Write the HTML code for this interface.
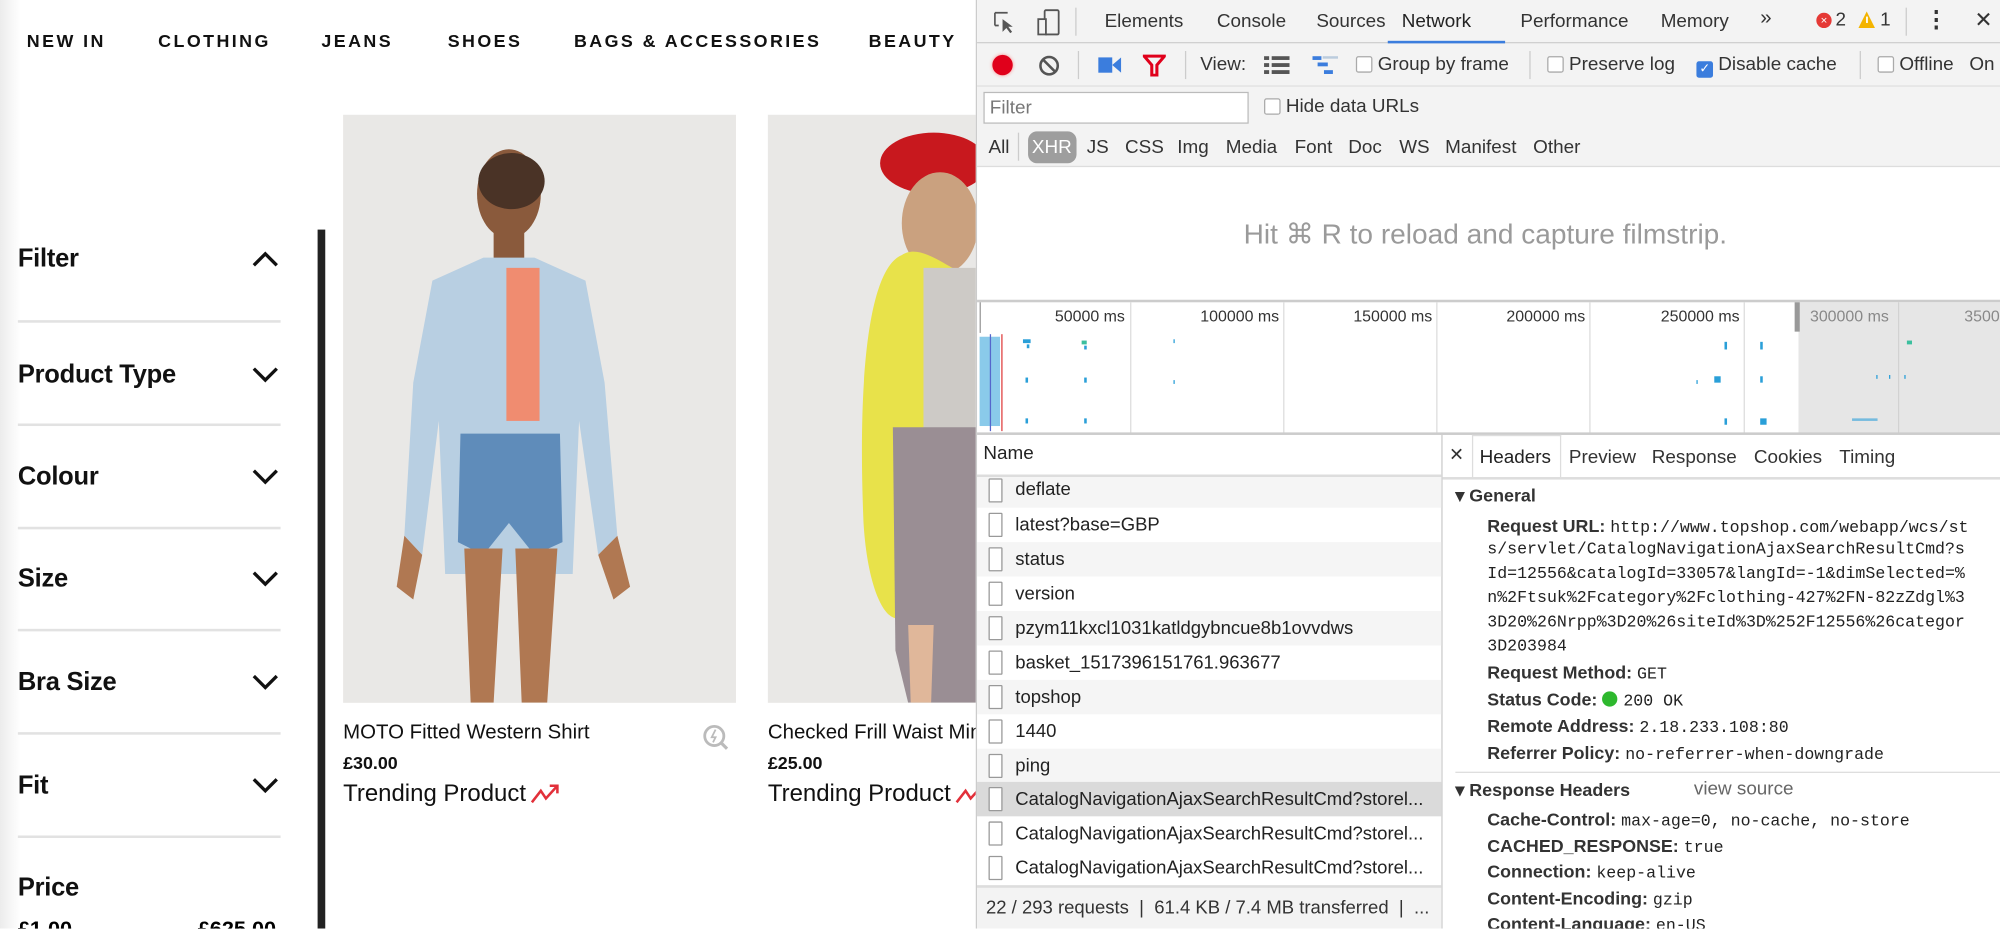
<!DOCTYPE html>
<html><head><meta charset="utf-8">
<style>
*{box-sizing:border-box;margin:0;padding:0}
html,body{width:2000px;height:928px;overflow:hidden;background:#fff}
#w{position:absolute;left:0;top:0;width:1568px;height:728px;transform:scale(1.27551);transform-origin:0 0;font-family:"Liberation Sans",sans-serif;overflow:hidden}
.a{position:absolute;white-space:nowrap}
.nav{top:24px;font-size:14px;letter-spacing:1.9px;color:#111;font-weight:bold}
.fl{left:14px;font-size:20px;font-weight:bold;color:#111;letter-spacing:-0.2px}
.hr{position:absolute;left:14px;width:206px;height:2px;background:#e2e2e2}
.chev{position:absolute;left:197px;width:22px;height:14px}
.dt{font-size:14.8px;color:#333}
.row{position:absolute;left:766px;width:364px;height:27px;font-size:14.5px;color:#222}
.row i{position:absolute;left:9px;top:4px;width:11px;height:19px;border:1px solid #999;border-radius:1px;background:#fff}
.row span{position:absolute;left:30px;top:6px;line-height:16px}
.mono{font-family:"Liberation Mono",monospace;font-size:13px;color:#222}
.k{font-weight:bold;color:#333;font-size:14px}
.ln{position:absolute;left:1166px;white-space:nowrap;line-height:16px}
.cb{display:inline-block;width:13px;height:13px;border:1px solid #aaa;border-radius:2px;background:#fff;vertical-align:-2px}
</style></head><body><div id="w">
<div class="a" style="left:0;top:0;width:16px;height:728px;background:linear-gradient(90deg,#ececec,#fff)"></div>
<div class="a nav" style="left:21px">NEW IN</div>
<div class="a nav" style="left:124px">CLOTHING</div>
<div class="a nav" style="left:252px">JEANS</div>
<div class="a nav" style="left:351px">SHOES</div>
<div class="a nav" style="left:450px">BAGS &amp; ACCESSORIES</div>
<div class="a nav" style="left:681px">BEAUTY</div>

<div class="a fl" style="top:192px">Filter</div>
<svg class="chev" style="top:196px" viewBox="0 0 22 14"><path d="M2 12 L11 3 L20 12" fill="none" stroke="#111" stroke-width="2.6"/></svg>
<div class="hr" style="top:251px"></div>
<div class="a fl" style="top:283px">Product Type</div>
<svg class="chev" style="top:287px" viewBox="0 0 22 14"><path d="M2 2 L11 11 L20 2" fill="none" stroke="#111" stroke-width="2.6"/></svg>
<div class="hr" style="top:332px"></div>
<div class="a fl" style="top:363px">Colour</div>
<svg class="chev" style="top:367px" viewBox="0 0 22 14"><path d="M2 2 L11 11 L20 2" fill="none" stroke="#111" stroke-width="2.6"/></svg>
<div class="hr" style="top:413px"></div>
<div class="a fl" style="top:443px">Size</div>
<svg class="chev" style="top:447px" viewBox="0 0 22 14"><path d="M2 2 L11 11 L20 2" fill="none" stroke="#111" stroke-width="2.6"/></svg>
<div class="hr" style="top:493px"></div>
<div class="a fl" style="top:524px">Bra Size</div>
<svg class="chev" style="top:528px" viewBox="0 0 22 14"><path d="M2 2 L11 11 L20 2" fill="none" stroke="#111" stroke-width="2.6"/></svg>
<div class="hr" style="top:574px"></div>
<div class="a fl" style="top:605px">Fit</div>
<svg class="chev" style="top:609px" viewBox="0 0 22 14"><path d="M2 2 L11 11 L20 2" fill="none" stroke="#111" stroke-width="2.6"/></svg>
<div class="hr" style="top:655px"></div>
<div class="a fl" style="top:685px">Price</div>
<div class="a" style="left:14px;top:719px;font-size:17px;font-weight:bold">£1.00</div>
<div class="a" style="left:155px;top:719px;font-size:17px;font-weight:bold">£625.00</div>
<div class="a" style="left:249px;top:180px;width:6px;height:548px;background:#222"></div>

<div class="a" style="left:269px;top:90px;width:308px;height:461px;background:#e9e8e6;overflow:hidden">
 <svg width="308" height="461" viewBox="0 0 308 461">
  <ellipse cx="130" cy="62" rx="25" ry="35" fill="#8a5a3c"/>
  <ellipse cx="132" cy="52" rx="26" ry="22" fill="#4a3326"/>
  <rect x="118" y="90" width="24" height="30" fill="#8a5a3c"/>
  <path d="M70 130 L110 112 L150 112 L190 130 L205 210 L215 330 L200 345 L185 240 L180 360 L80 360 L75 240 L62 345 L48 330 L55 210 Z" fill="#b8cfe2"/>
  <rect x="128" y="120" width="26" height="120" fill="#f08c70"/>
  <path d="M92 250 L170 250 L172 335 L150 345 L130 320 L110 345 L90 335 Z" fill="#5f8cba"/>
  <path d="M95 340 L125 340 L118 461 L100 461 Z M135 340 L168 340 L160 461 L140 461 Z" fill="#b07852"/>
  <path d="M48 330 L62 345 L55 380 L42 370 Z M200 345 L215 330 L225 370 L212 380 Z" fill="#b07852"/>
 </svg>
</div>
<div class="a" style="left:269px;top:566px;font-size:16px;color:#111">MOTO Fitted Western Shirt</div>
<svg class="a" style="left:550px;top:567px" width="22" height="22" viewBox="0 0 22 22"><circle cx="10" cy="10" r="7.5" fill="none" stroke="#bbb" stroke-width="2.2"/><path d="M15.5 15.5 L20 20" stroke="#bbb" stroke-width="2.5"/><path d="M11 5 L8 11 L11 11 L9 15" stroke="#bbb" stroke-width="1.4" fill="none"/></svg>
<div class="a" style="left:269px;top:590px;font-size:14px;font-weight:bold;color:#111">£30.00</div>
<div class="a" style="left:269px;top:611px;font-size:18.8px;color:#111">Trending Product</div>
<svg class="a" style="left:416px;top:613px" width="24" height="18" viewBox="0 0 24 18"><path d="M1 16 L8 7 L12 13 L21 3 M15 3 L21 3 L21 9" fill="none" stroke="#e2303a" stroke-width="2"/></svg>

<div class="a" style="left:602px;top:90px;width:164px;height:461px;background:#e9e8e6;overflow:hidden">
 <svg width="164" height="461" viewBox="0 0 164 461">
  <ellipse cx="130" cy="38" rx="42" ry="24" fill="#c8181e"/>
  <ellipse cx="135" cy="85" rx="30" ry="40" fill="#caa17f"/>
  <path d="M105 110 C80 120 70 200 75 320 C80 400 110 420 120 360 C130 300 140 260 164 250 L164 130 C140 120 120 100 105 110Z" fill="#e8e24a"/>
  <rect x="122" y="120" width="42" height="130" fill="#cdcac6"/>
  <path d="M98 245 L164 245 L164 461 L110 461 L100 420 Z" fill="#9a8e94"/>
  <path d="M110 400 L130 400 L128 461 L112 461 Z" fill="#e0b79a"/>
 </svg>
</div>
<div class="a" style="left:602px;top:566px;font-size:16px;color:#111">Checked Frill Waist Mini</div>
<div class="a" style="left:602px;top:590px;font-size:14px;font-weight:bold;color:#111">£25.00</div>
<div class="a" style="left:602px;top:611px;font-size:18.8px;color:#111">Trending Product</div>
<svg class="a" style="left:749px;top:613px" width="24" height="18" viewBox="0 0 24 18"><path d="M1 16 L8 7 L12 13 L21 3" fill="none" stroke="#e2303a" stroke-width="2"/></svg>

<div class="a" style="left:765px;top:0;width:803px;height:728px;background:#fff;border-left:1px solid #ccc;overflow:hidden">
 <div class="a" style="left:0;top:0;width:803px;height:34px;background:#f3f3f3;border-bottom:1px solid #ccc"></div>
 <div class="a" style="left:0;top:34px;width:803px;height:34px;background:#f3f3f3;border-bottom:1px solid #ddd"></div>
 <div class="a" style="left:0;top:68px;width:803px;height:63px;background:#f3f3f3;border-bottom:1px solid #ddd"></div>
</div>
<svg class="a" style="left:778px;top:8px" width="20" height="20" viewBox="0 0 20 20"><path d="M2 2 H12 M2 2 V12 M2 12 H5" stroke="#555" stroke-width="1.3" fill="none"/><path d="M8 7 L8 17 L11 14 L14 18 L15.5 17 L12.5 13 L16 13 Z" fill="#555"/></svg>
<svg class="a" style="left:812px;top:7px" width="20" height="22" viewBox="0 0 20 22"><rect x="7" y="1" width="11" height="19" rx="1" fill="none" stroke="#555" stroke-width="1.4"/><rect x="2" y="8" width="6" height="12" fill="#f3f3f3" stroke="#555" stroke-width="1.4"/></svg>
<div class="a" style="left:843px;top:6px;width:1px;height:22px;background:#ccc"></div>
<div class="a dt" style="left:866px;top:9px">Elements</div>
<div class="a dt" style="left:954px;top:9px">Console</div>
<div class="a dt" style="left:1032px;top:9px">Sources</div>
<div class="a dt" style="left:1099px;top:9px;color:#222">Network</div>
<div class="a" style="left:1088px;top:32px;width:92px;height:2px;background:#3b7ddd"></div>
<div class="a dt" style="left:1192px;top:9px">Performance</div>
<div class="a dt" style="left:1302px;top:9px">Memory</div>
<div class="a dt" style="left:1380px;top:6px;font-size:16px">»</div>
<div class="a" style="left:1424px;top:10px;width:12px;height:12px;border-radius:6px;background:#e53935;color:#fff;font-size:9px;text-align:center;line-height:12px">×</div>
<div class="a dt" style="left:1439px;top:8px">2</div>
<svg class="a" style="left:1457px;top:9px" width="13" height="13" viewBox="0 0 13 13"><path d="M6.5 0 L13 13 L0 13Z" fill="#f4b400"/><rect x="6" y="4" width="1.4" height="5" fill="#fff"/></svg>
<div class="a dt" style="left:1474px;top:8px">1</div>
<div class="a" style="left:1494px;top:6px;width:1px;height:22px;background:#ccc"></div>
<div class="a dt" style="left:1509px;top:5px;font-size:18px;font-weight:bold">⋮</div>
<div class="a dt" style="left:1548px;top:6px;font-size:17px">✕</div>
<div class="a" style="left:778px;top:43px;width:16px;height:16px;border-radius:8px;background:#e0001b;box-shadow:0 0 3px #f88"></div>
<svg class="a" style="left:814px;top:43px" width="17" height="17" viewBox="0 0 17 17"><circle cx="8.5" cy="8.5" r="6.8" fill="none" stroke="#555" stroke-width="2"/><path d="M4 4 L13 13" stroke="#555" stroke-width="2"/></svg>
<div class="a" style="left:845px;top:40px;width:1px;height:22px;background:#ccc"></div>
<svg class="a" style="left:861px;top:44px" width="18" height="14" viewBox="0 0 18 14"><rect x="0" y="1" width="11" height="12" fill="#3b7ddd"/><path d="M11 7 L18 1 V13Z" fill="#3b7ddd"/></svg>
<svg class="a" style="left:896px;top:42px" width="18" height="18" viewBox="0 0 18 18"><path d="M1 2 H17 L11 9 V17 H7 V9 Z" fill="none" stroke="#e0001b" stroke-width="2.4"/></svg>
<div class="a" style="left:929px;top:40px;width:1px;height:22px;background:#ccc"></div>
<div class="a dt" style="left:941px;top:43px">View:</div>
<svg class="a" style="left:991px;top:44px" width="20" height="14" viewBox="0 0 20 14"><g fill="#555"><rect x="0" y="0" width="4" height="3"/><rect x="6" y="0" width="14" height="3"/><rect x="0" y="5.5" width="4" height="3"/><rect x="6" y="5.5" width="14" height="3"/><rect x="0" y="11" width="4" height="3"/><rect x="6" y="11" width="14" height="3"/></g></svg>
<svg class="a" style="left:1029px;top:44px" width="20" height="16" viewBox="0 0 20 16"><g fill="#3b7ddd"><rect x="0" y="0" width="7" height="3"/><rect x="4" y="5" width="8" height="3"/><rect x="9" y="11" width="7" height="3"/></g><rect x="8" y="0" width="12" height="2" fill="#bcd"/></svg>
<div class="a dt" style="left:1063px;top:43px"><span class="cb"></span> Group by frame</div>
<div class="a" style="left:1199px;top:40px;width:1px;height:22px;background:#ccc"></div>
<div class="a dt" style="left:1213px;top:43px"><span class="cb"></span> Preserve log</div>
<div class="a dt" style="left:1330px;top:43px"><span class="cb" style="background:#3b7ddd;border-color:#3b7ddd;color:#fff;font-size:10px;text-align:center;line-height:11px">✓</span> Disable cache</div>
<div class="a" style="left:1458px;top:40px;width:1px;height:22px;background:#ccc"></div>
<div class="a dt" style="left:1472px;top:43px"><span class="cb"></span> Offline&nbsp;&nbsp; On</div>
<div class="a" style="left:771px;top:72px;width:208px;height:25px;background:#fff;border:1px solid #bbb;font-size:14.8px;color:#777;padding:4px 4px">Filter</div>
<div class="a dt" style="left:991px;top:76px"><span class="cb"></span> Hide data URLs</div>
<div class="a dt" style="left:775px;top:108px">All</div>
<div class="a" style="left:798px;top:104px;width:1px;height:22px;background:#ccc"></div>
<div class="a" style="left:806px;top:103px;width:38px;height:25px;border-radius:7px;background:#9e9e9e"></div>
<div class="a dt" style="left:809px;top:108px;color:#fff">XHR</div>
<div class="a dt" style="left:852px;top:108px">JS</div>
<div class="a dt" style="left:882px;top:108px">CSS</div>
<div class="a dt" style="left:923px;top:108px">Img</div>
<div class="a dt" style="left:961px;top:108px">Media</div>
<div class="a dt" style="left:1015px;top:108px">Font</div>
<div class="a dt" style="left:1057px;top:108px">Doc</div>
<div class="a dt" style="left:1097px;top:108px">WS</div>
<div class="a dt" style="left:1133px;top:108px">Manifest</div>
<div class="a dt" style="left:1202px;top:108px">Other</div>
<div class="a" style="left:975px;top:171px;font-size:22px;color:#9a9a9a">Hit ⌘ R to reload and capture filmstrip.</div>
<div class="a" style="left:766px;top:235px;width:802px;height:2px;background:#ccc"></div>
<div class="a" style="left:1410px;top:237px;width:158px;height:103px;background:#e6e6e6"></div>
<div class="a" style="left:1407px;top:237px;width:4px;height:23px;background:#999"></div>
<div class="a" style="left:768px;top:237px;width:1px;height:24px;background:#999"></div>
<div class="a" style="left:886px;top:237px;width:1px;height:103px;background:#ddd"></div>
<div class="a" style="left:1006px;top:237px;width:1px;height:103px;background:#ddd"></div>
<div class="a" style="left:1126px;top:237px;width:1px;height:103px;background:#ddd"></div>
<div class="a" style="left:1246px;top:237px;width:1px;height:103px;background:#ddd"></div>
<div class="a" style="left:1367px;top:237px;width:1px;height:103px;background:#ddd"></div>
<div class="a" style="left:1488px;top:237px;width:1px;height:103px;background:#d2d2d2"></div>
<div class="a" style="left:827px;top:241px;font-size:12.5px;color:#333">50000 ms</div>
<div class="a" style="left:941px;top:241px;font-size:12.5px;color:#333">100000 ms</div>
<div class="a" style="left:1061px;top:241px;font-size:12.5px;color:#333">150000 ms</div>
<div class="a" style="left:1181px;top:241px;font-size:12.5px;color:#333">200000 ms</div>
<div class="a" style="left:1302px;top:241px;font-size:12.5px;color:#333">250000 ms</div>
<div class="a" style="left:1419px;top:241px;font-size:12.5px;color:#888">300000 ms</div>
<div class="a" style="left:1540px;top:241px;font-size:12.5px;color:#888">3500</div>
<svg class="a" style="left:766px;top:260px" width="802" height="80" viewBox="0 0 802 80">
 <g fill="#2a9fd8">
  <rect x="2" y="4" width="16" height="70" opacity=".55"/>
  <rect x="36" y="6" width="6" height="3"/><rect x="39" y="10" width="2" height="3"/>
  <rect x="82" y="7" width="4" height="3" fill="#3bbf9e"/><rect x="84" y="11" width="2" height="3"/>
  <rect x="38" y="36" width="2" height="4"/><rect x="84" y="36" width="2" height="4"/>
  <rect x="38" y="68" width="2" height="4"/><rect x="84" y="68" width="2" height="4"/>
  <rect x="154" y="6" width="1" height="3"/><rect x="154" y="38" width="1" height="3"/>
  <rect x="586" y="8" width="2" height="6"/><rect x="614" y="8" width="2" height="6"/>
  <rect x="564" y="38" width="1" height="3"/><rect x="578" y="35" width="5" height="5"/><rect x="614" y="35" width="2" height="5"/>
  <rect x="586" y="68" width="2" height="5"/><rect x="614" y="68" width="5" height="5"/>
  <rect x="729" y="7" width="4" height="3" fill="#3bbf9e"/><rect x="705" y="34" width="1" height="3"/><rect x="715" y="34" width="1" height="3"/><rect x="727" y="34" width="1" height="3"/>
  <rect x="686" y="68" width="20" height="2" opacity=".6"/>
 </g>
 <rect x="10" y="2" width="1" height="76" fill="#5566cc"/><rect x="19" y="2" width="1" height="76" fill="#e04040"/>
</svg>
<div class="a" style="left:766px;top:339px;width:802px;height:2px;background:#ccc"></div>
<div class="a" style="left:1130px;top:341px;width:1px;height:387px;background:#ccc"></div>
<div class="a dt" style="left:771px;top:348px;color:#222">Name</div>
<div class="a" style="left:766px;top:372px;width:364px;height:2px;background:#ddd"></div>
<div class="row" style="top:374px;height:24px;background:#f5f5f5"><i style="top:1px"></i><span style="top:2px">deflate</span></div>
<div class="row" style="top:398px"><i></i><span>latest?base=GBP</span></div>
<div class="row" style="top:425px;background:#f5f5f5"><i></i><span>status</span></div>
<div class="row" style="top:452px"><i></i><span>version</span></div>
<div class="row" style="top:479px;background:#f5f5f5"><i></i><span>pzym11kxcl1031katldgybncue8b1ovvdws</span></div>
<div class="row" style="top:506px"><i></i><span>basket_1517396151761.963677</span></div>
<div class="row" style="top:533px;background:#f5f5f5"><i></i><span>topshop</span></div>
<div class="row" style="top:560px"><i></i><span>1440</span></div>
<div class="row" style="top:587px;background:#f5f5f5"><i></i><span>ping</span></div>
<div class="row" style="top:613px;background:#dadada"><i></i><span>CatalogNavigationAjaxSearchResultCmd?storel...</span></div>
<div class="row" style="top:640px"><i></i><span>CatalogNavigationAjaxSearchResultCmd?storel...</span></div>
<div class="row" style="top:667px"><i></i><span>CatalogNavigationAjaxSearchResultCmd?storel...</span></div>
<div class="a" style="left:766px;top:694px;width:364px;height:34px;background:#f3f3f3;border-top:2px solid #ddd"></div>
<div class="a" style="left:773px;top:704px;font-size:14.5px;color:#333">22 / 293 requests &nbsp;|&nbsp; 61.4 KB / 7.4 MB transferred &nbsp;|&nbsp; ...</div>
<div class="a dt" style="left:1136px;top:348px;font-size:14px">✕</div>
<div class="a" style="left:1154px;top:341px;width:70px;height:34px;background:#fff;border:1px solid #ddd;border-bottom:none"></div>
<div class="a dt" style="left:1160px;top:351px;color:#222">Headers</div>
<div class="a dt" style="left:1230px;top:351px">Preview</div>
<div class="a dt" style="left:1295px;top:351px">Response</div>
<div class="a dt" style="left:1375px;top:351px">Cookies</div>
<div class="a dt" style="left:1442px;top:351px">Timing</div>
<div class="a" style="left:1131px;top:374px;width:437px;height:2px;background:#ddd"></div>
<div class="a k" style="left:1141px;top:380px">▾ General</div>
<div class="ln" style="top:404px"><span class="k">Request URL: </span><span class="mono">http://www.topshop.com/webapp/wcs/st</span></div>
<div class="ln mono" style="top:423px">s/servlet/CatalogNavigationAjaxSearchResultCmd?s</div>
<div class="ln mono" style="top:442px">Id=12556&amp;catalogId=33057&amp;langId=-1&amp;dimSelected=%</div>
<div class="ln mono" style="top:461px">n%2Ftsuk%2Fcategory%2Fclothing-427%2FN-82zZdgl%3</div>
<div class="ln mono" style="top:480px">3D20%26Nrpp%3D20%26siteId%3D%252F12556%26categor</div>
<div class="ln mono" style="top:499px">3D203984</div>
<div class="ln" style="top:519px"><span class="k">Request Method: </span><span class="mono">GET</span></div>
<div class="ln" style="top:540px"><span class="k">Status Code: </span><span style="display:inline-block;width:12px;height:12px;border-radius:6px;background:#2eb82e;vertical-align:-1px"></span> <span class="mono">200 OK</span></div>
<div class="ln" style="top:561px"><span class="k">Remote Address: </span><span class="mono">2.18.233.108:80</span></div>
<div class="ln" style="top:582px"><span class="k">Referrer Policy: </span><span class="mono">no-referrer-when-downgrade</span></div>
<div class="a" style="left:1141px;top:605px;width:427px;height:1px;background:#ddd"></div>
<div class="a k" style="left:1141px;top:611px">▾ Response Headers</div>
<div class="a dt" style="left:1328px;top:611px;color:#666">view source</div>
<div class="ln" style="top:634px"><span class="k">Cache-Control: </span><span class="mono">max-age=0, no-cache, no-store</span></div>
<div class="ln" style="top:655px"><span class="k">CACHED_RESPONSE: </span><span class="mono">true</span></div>
<div class="ln" style="top:675px"><span class="k">Connection: </span><span class="mono">keep-alive</span></div>
<div class="ln" style="top:696px"><span class="k">Content-Encoding: </span><span class="mono">gzip</span></div>
<div class="ln" style="top:716px"><span class="k">Content-Language: </span><span class="mono">en-US</span></div>
</div></body></html>
